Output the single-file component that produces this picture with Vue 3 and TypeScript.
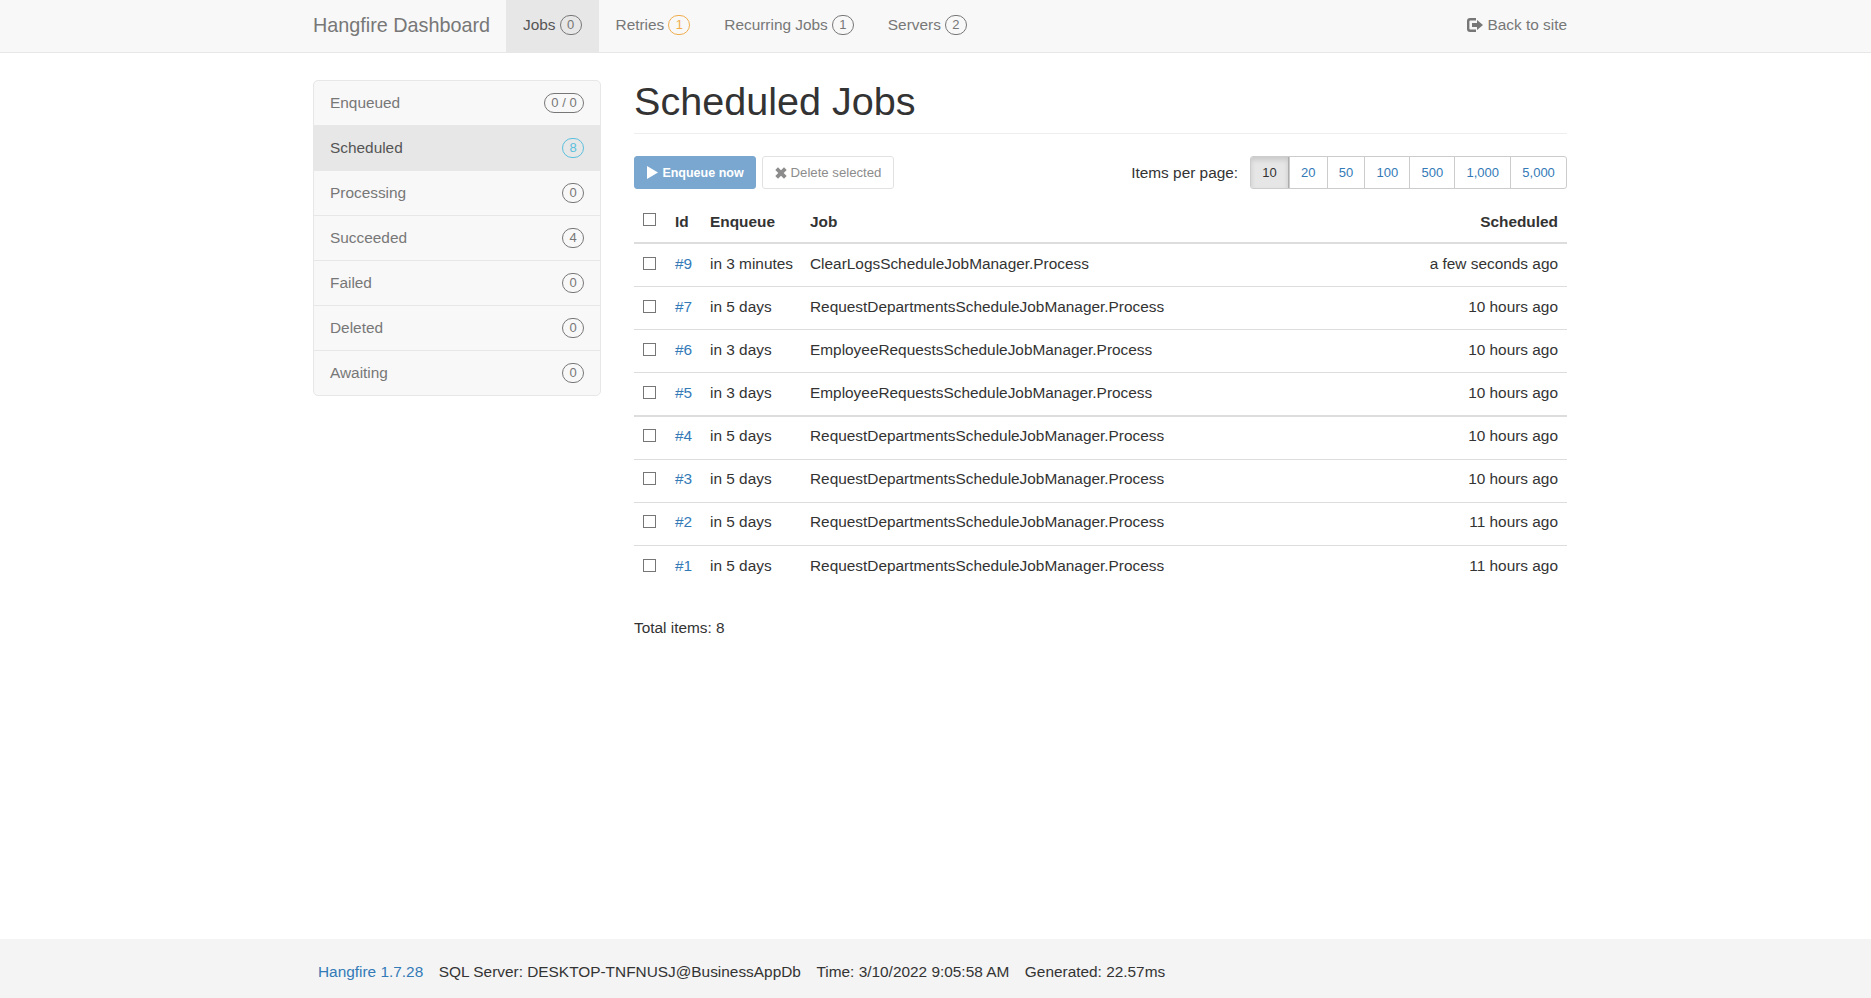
<script setup lang="ts">
interface NavItem { label: string; count: number; tone?: string; active?: boolean }
interface SideItem { label: string; count: string; tone?: string; active?: boolean }
interface Job { id: number; enqueue: string; job: string; scheduled: string }

const navItems: NavItem[] = [
  { label: 'Jobs', count: 0, active: true },
  { label: 'Retries', count: 1, tone: 'warn' },
  { label: 'Recurring Jobs', count: 1 },
  { label: 'Servers', count: 2 },
]
const sideItems: SideItem[] = [
  { label: 'Enqueued', count: '0 / 0' },
  { label: 'Scheduled', count: '8', tone: 'info', active: true },
  { label: 'Processing', count: '0' },
  { label: 'Succeeded', count: '4' },
  { label: 'Failed', count: '0' },
  { label: 'Deleted', count: '0' },
  { label: 'Awaiting', count: '0' },
]
const R = 'RequestDepartmentsScheduleJobManager.Process'
const E = 'EmployeeRequestsScheduleJobManager.Process'
const jobs: Job[] = [
  { id: 9, enqueue: 'in 3 minutes', job: 'ClearLogsScheduleJobManager.Process', scheduled: 'a few seconds ago' },
  { id: 7, enqueue: 'in 5 days', job: R, scheduled: '10 hours ago' },
  { id: 6, enqueue: 'in 3 days', job: E, scheduled: '10 hours ago' },
  { id: 5, enqueue: 'in 3 days', job: E, scheduled: '10 hours ago' },
  { id: 4, enqueue: 'in 5 days', job: R, scheduled: '10 hours ago' },
  { id: 3, enqueue: 'in 5 days', job: R, scheduled: '10 hours ago' },
  { id: 2, enqueue: 'in 5 days', job: R, scheduled: '11 hours ago' },
  { id: 1, enqueue: 'in 5 days', job: R, scheduled: '11 hours ago' },
]
const pages = ['10', '20', '50', '100', '500', '1,000', '5,000']
</script>

<template>
  <div class="page">
    <header class="navbar">
      <div class="wrap nav-inner">
        <a class="brand">Hangfire Dashboard</a>
        <a v-for="n in navItems" :key="n.label" class="nav-link" :class="{ active: n.active }">
          {{ n.label }} <span class="badge" :class="n.tone">{{ n.count }}</span>
        </a>
        <a class="back">
          <svg class="back-icon" viewBox="0 0 16 14" width="16" height="14" aria-hidden="true">
            <path fill="currentColor" d="M3 0h6v2.4H3.4a1 1 0 0 0-1 1v7.2a1 1 0 0 0 1 1H9V14H3a3 3 0 0 1-3-3V3a3 3 0 0 1 3-3z" />
            <path fill="currentColor" d="M5 5h5V2l6 5-6 5V9H5z" />
          </svg>
          Back to site
        </a>
      </div>
    </header>

    <main class="wrap content">
      <aside class="side">
        <a v-for="s in sideItems" :key="s.label" class="side-item" :class="{ active: s.active }">
          <span>{{ s.label }}</span>
          <span class="badge" :class="s.tone">{{ s.count }}</span>
        </a>
      </aside>
      <section class="main">
        <h1>Scheduled Jobs</h1>
        <div class="toolbar">
          <button class="btn primary">
            <svg viewBox="0 0 12 14" width="11" height="13" aria-hidden="true"><path fill="currentColor" d="M0 0l12 7-12 7z" /></svg>
            Enqueue now
          </button>
          <button class="btn ghost">
            <svg viewBox="0 0 12 12" width="12" height="12" aria-hidden="true"><path fill="currentColor" d="M3 .3L6 3.3 9 .3 11.7 3 8.7 6l3 3L9 11.7l-3-3-3 3L.3 9l3-3-3-3z" /></svg>
            Delete selected
          </button>
          <div class="per-page">
            <span class="per-label">Items per page:</span>
            <div class="pager">
              <a v-for="(p, i) in pages" :key="p" class="pg" :class="{ on: i === 0 }">{{ p }}</a>
            </div>
          </div>
        </div>

        <table class="jobs">
          <colgroup>
            <col class="c-check" /><col class="c-id" /><col class="c-enq" /><col /><col class="c-sch" />
          </colgroup>
          <thead>
            <tr>
              <th class="check"><span class="box head-box"></span></th>
              <th>Id</th><th>Enqueue</th><th>Job</th><th class="right">Scheduled</th>
            </tr>
          </thead>
          <tbody>
            <tr v-for="j in jobs" :key="j.id">
              <td class="check"><span class="box"></span></td>
              <td><a class="link">#{{ j.id }}</a></td>
              <td>{{ j.enqueue }}</td>
              <td>{{ j.job }}</td>
              <td class="right">{{ j.scheduled }}</td>
            </tr>
          </tbody>
        </table>
        <p class="total">Total items: 8</p>
      </section>
    </main>

    <footer class="footer">
      <div class="wrap foot-inner">
        <a class="link">Hangfire 1.7.28</a>
        <span>SQL Server: DESKTOP-TNFNUSJ@BusinessAppDb</span>
        <span>Time: 3/10/2022 9:05:58 AM</span>
        <span>Generated: 22.57ms</span>
      </div>
    </footer>
  </div>
</template>

<style>
html, body { margin: 0; background: #fff; }
</style>

<style scoped>
.page {
  display: flex;
  flex-direction: column;
  height: 998px;
  overflow: hidden;
  font-family: "Liberation Sans", Arial, sans-serif;
  font-size: 15.4px;
  line-height: 22px;
  color: #333;
}
.wrap { width: 1254px; margin-left: 313px; flex: none; }
.navbar { height: 52px; background: #f8f8f8; border-bottom: 1px solid #e7e7e7; flex: none; }
.nav-inner { display: flex; align-items: stretch; height: 52px; color: #777; }
.brand { font-size: 19.8px; line-height: 50px; width: 193px; }
.nav-link { display: flex; align-items: center; gap: 4px; padding: 0 17px 2px; }
.nav-link.active { background: #e7e7e7; color: #555; }
.back { margin-left: auto; display: flex; align-items: center; gap: 4px; padding-bottom: 2px; }
.back-icon { margin-top: -1px; }

.badge {
  display: inline-block;
  box-sizing: border-box;
  min-width: 22px;
  height: 20px;
  padding: 0 6.4px;
  border: 1px solid #777;
  border-radius: 11px;
  font-size: 13px;
  line-height: 18px;
  text-align: center;
  color: #777;
  white-space: nowrap;
}
.badge.warn { border-color: #f0ad4e; color: #f0ad4e; }
.badge.info { border-color: #5bc0de; color: #5bc0de; }

.content { display: flex; align-items: flex-start; gap: 33px; flex: 1; padding-top: 28px; }
.side {
  width: 288px;
  flex: none;
  box-sizing: border-box;
  border: 1px solid #e7e7e7;
  border-radius: 5px;
  background: #f8f8f8;
  overflow: hidden;
  margin-top: -1px;
}
.side-item {
  display: flex;
  align-items: center;
  justify-content: space-between;
  box-sizing: border-box;
  height: 45px;
  padding: 0 16px;
  color: #777;
  border-bottom: 1px solid #e7e7e7;
}
.side-item:last-child { border-bottom: 0; height: 44px; }
.side-item.active { background: #e7e7e7; color: #555; }

.main { flex: 1; min-width: 0; }
h1 {
  margin: 0 0 22px;
  height: 52px;
  font-size: 39.6px;
  font-weight: 400;
  line-height: 40px;
  color: #333;
  border-bottom: 1px solid #eee;
}
.toolbar { display: flex; align-items: center; height: 33px; gap: 6px; }
.btn {
  display: inline-flex;
  align-items: center;
  justify-content: center;
  gap: 4px;
  box-sizing: border-box;
  height: 33px;
  border-radius: 3px;
  font: inherit;
  font-size: 13.2px;
  padding: 0;
}
.primary { width: 122px; padding-left: 1px; background: #7aa7cf; border: 1px solid #7aa7cf; color: #fff; font-weight: 700; font-size: 12.5px; }
.ghost { width: 132px; background: #fff; border: 1px solid #e2e2e2; color: #8c8c8c; }
.per-page { margin-left: auto; display: flex; align-items: center; gap: 12px; }
.pager { display: flex; height: 33px; box-sizing: border-box; border: 1px solid #ccc; border-radius: 3px; overflow: hidden; }
.pg {
  display: flex;
  align-items: center;
  justify-content: center;
  padding: 0 11.15px;
  font-size: 13px;
  color: #337ab7;
  border-left: 1px solid #ccc;
}
.pg:first-child { border-left: 0; }
.pg.on { background: #e6e6e6; color: #333; box-shadow: inset 0 3px 5px rgba(0, 0, 0, .125); border-right: 1px solid #adadad; }

.jobs { width: 100%; margin-top: 10px; border-collapse: collapse; table-layout: fixed; }
.c-check { width: 32px; }
.c-id { width: 35px; }
.c-enq { width: 100px; }
.c-sch { width: 260px; }
th, td { padding: 0 9px 2px; text-align: left; height: 43px; box-sizing: border-box; white-space: nowrap; }
th { height: 44px; padding: 2px 9px 0; font-weight: 700; border-bottom: 2px solid #ddd; }
td { border-bottom: 1px solid #ddd; }
tbody tr:nth-child(4) td { height: 44px; border-bottom-width: 2px; }
tbody tr:nth-child(n+5):nth-child(-n+7) td { padding-bottom: 4px; }
tbody tr:last-child td { border-bottom: 0; }
.right { text-align: right; }
th.check { padding: 0 0 0 9px; }
tbody tr td.check { padding: 0 0 2px 9px; }
.box {
  display: block;
  box-sizing: border-box;
  width: 13px;
  height: 13px;
  background: #fff;
  border: 1px solid #767676;
  border-radius: 0;
}
.head-box { margin-top: -3px; }
.link { color: #337ab7; }
.total { margin: 29px 0 0; }

.footer { height: 59px; background: #f4f4f4; flex: none; }
.foot-inner { display: flex; gap: 15.6px; padding: 22px 0 0 5px; box-sizing: border-box; }
</style>
